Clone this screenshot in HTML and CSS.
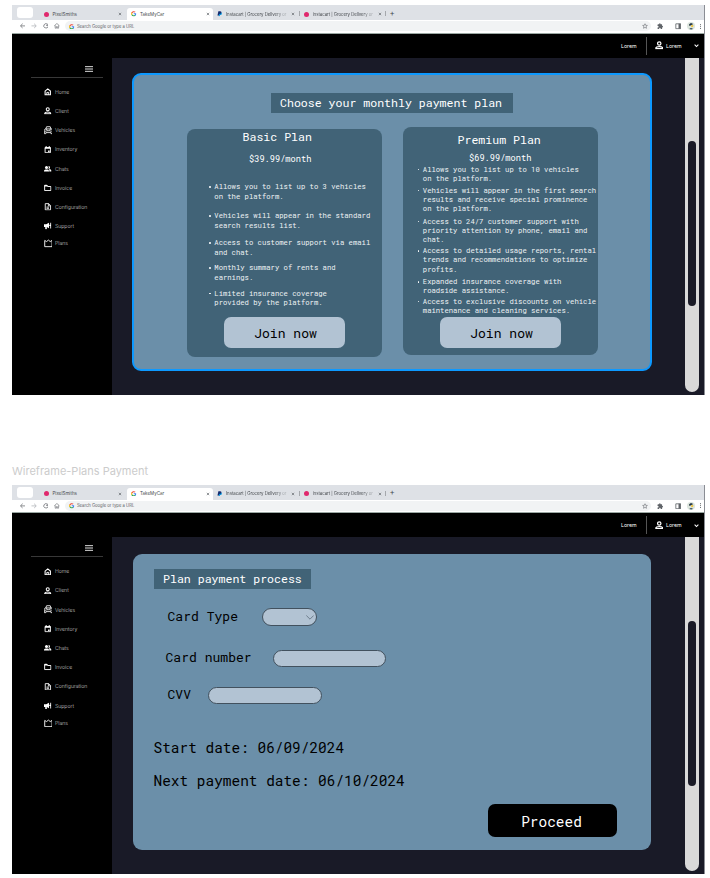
FILE: index.html
```html
<!DOCTYPE html>
<html lang="en">
<head>
<meta charset="utf-8">
<title>TakeMyCar</title>
<link rel="stylesheet" href="styles.css">
</head>
<body>
<svg class="sprite" aria-hidden="true">
  <symbol id="google" viewBox="0 0 24 24"><path fill="#4285f4" d="M23 12.3c0-.8-.1-1.600-.2-2.300H12v4.500h6.200a5.300 5.300 0 0 1-2.300 3.500v3h3.700c2.200-2 3.400-5 3.400-8.700z"/><path fill="#34a853" d="M12 23.500c3.100 0 5.700-1 7.600-2.800l-3.700-2.900c-1 .7-2.300 1.100-3.900 1.100-3 0-5.500-2-6.400-4.700H1.800v2.900A11.500 11.500 0 0 0 12 23.500z"/><path fill="#fbbc05" d="M5.600 14.200a6.900 6.900 0 0 1 0-4.400v-3H1.800a11.500 11.500 0 0 0 0 10.300z"/><path fill="#ea4335" d="M12 5.100c1.700 0 3.200.6 4.400 1.700l3.300-3.300A11.500 11.500 0 0 0 1.800 6.900l3.800 2.900C6.500 7.100 9 5.100 12 5.100z"/></symbol>
  <symbol id="paypal" viewBox="0 0 24 24"><path fill="#0a9be0" d="M9 6h9c4 1 4 6 2 9-2 2-4 2-7 2l-1 6H7z"/><path fill="#142c70" d="M6 1h8c5 0 6 4 5 7-1 4-4 5-9 5l-2 7H2z"/></symbol>
  <symbol id="close" viewBox="0 0 24 24"><path d="M5 5l14 14M19 5L5 19" fill="none" stroke="currentColor" stroke-width="4"/></symbol>
  <symbol id="back" viewBox="0 0 24 24"><path d="M22 12H3M11 3l-9 9 9 9" fill="none" stroke="currentColor" stroke-width="3"/></symbol>
  <symbol id="forward" viewBox="0 0 24 24"><path d="M2 12h19M13 3l9 9-9 9" fill="none" stroke="currentColor" stroke-width="3"/></symbol>
  <symbol id="reload" viewBox="0 0 24 24"><path d="M19 6a9 9 0 1 0 2 8M21 2v8h-8" fill="none" stroke="currentColor" stroke-width="3"/></symbol>
  <symbol id="house" viewBox="0 0 24 24"><path d="M1 12L12 2l11 10M5 10v12h5v-7h4v7h5V10" fill="none" stroke="currentColor" stroke-width="2.500"/></symbol>
  <symbol id="star" viewBox="0 0 24 24"><path d="M12 3l2.700 6.300 6.800.6-5.200 4.500 1.600 6.700L12 17.500l-5.900 3.600 1.600-6.700L2.500 9.900l6.800-.6z" fill="none" stroke="currentColor" stroke-width="2.200"/></symbol>
  <symbol id="puzzle" viewBox="0 0 24 24"><path fill="currentColor" d="M20 11h-1V7a2 2 0 0 0-2-2h-4V3.500a2.500 2.500 0 0 0-5 0V5H4a2 2 0 0 0-2 2v4h1.500a2.700 2.700 0 0 1 0 5.400H2V20c0 1.100.9 2 2 2h4v-1.500a2.700 2.700 0 0 1 5.400 0V22H17a2 2 0 0 0 2-2v-4h1a2.500 2.500 0 0 0 0-5z"/></symbol>
  <symbol id="panel" viewBox="0 0 24 24"><path d="M3 3h18v18H3z" fill="none" stroke="currentColor" stroke-width="3"/><path d="M13 3h8v18h-8z" fill="currentColor"/></symbol>
  <symbol id="avatar" viewBox="0 0 24 24"><circle cx="12" cy="12" r="12" fill="#dce5dd"/><path fill="#21313c" d="M6 9c1-7 11-7 12-2l-5 2-5 3z"/><path fill="#f0c33c" d="M12 10l7-1-1 6-5 1z"/><path fill="#3f5560" d="M7 21c2-4 8-4 11 0-3 2-8 2-11 0z"/></symbol>
  <symbol id="dots" viewBox="0 0 24 24"><g fill="currentColor"><circle cx="12" cy="3" r="2.500"/><circle cx="12" cy="12" r="2.500"/><circle cx="12" cy="21" r="2.500"/></g></symbol>
  <symbol id="chevron" viewBox="0 0 24 24"><path d="M3 8l9 9 9-9" fill="none" stroke="currentColor" stroke-width="5"/></symbol>
  <symbol id="thin-chevron" viewBox="0 0 24 14"><path d="M1 1l11 11L23 1" fill="none" stroke="currentColor" stroke-width="2.500"/></symbol>
  <symbol id="menu" viewBox="0 0 24 18"><path d="M0 2h24M0 9h24M0 16h24" stroke="currentColor" stroke-width="3"/></symbol>
  <symbol id="home" viewBox="0 0 24 24"><path d="M3.500 10L12 3l8.500 7v12h-17z" fill="none" stroke="currentColor" stroke-width="3.400"/><path d="M9 22v-8h6v8" fill="none" stroke="currentColor" stroke-width="3"/></symbol>
  <symbol id="client" viewBox="0 0 24 24"><circle cx="12" cy="7" r="4.800" fill="none" stroke="currentColor" stroke-width="3.400"/><path d="M2.500 21.500v-2c1-5 18-5 19 0v2z" fill="none" stroke="currentColor" stroke-width="3.400"/></symbol>
  <symbol id="car" viewBox="0 0 24 24"><path d="M5 8l2-6h10l2 6M3 8h18l2 4v9h-4v-3H5v3H1v-9zM7 8l1 5h8l1-5" fill="none" stroke="currentColor" stroke-width="2.300"/><circle cx="5" cy="14" r="1.700" fill="currentColor"/><circle cx="19" cy="14" r="1.700" fill="currentColor"/></symbol>
  <symbol id="calendar" viewBox="0 0 24 24"><path d="M3.500 5h17v16.500h-17z" fill="none" stroke="currentColor" stroke-width="3"/><path d="M3 4h18v5H3zM5 1h4v4H5zM15 1h4v4h-4zM13 14h5v5h-5z" fill="currentColor"/></symbol>
  <symbol id="group" viewBox="0 0 24 24"><path fill="currentColor" d="M0 21v-3c1-5 15-5 16 0v3zM17 21v-4l-2-3c5-1 9 1 9 4v3z"/><circle cx="8" cy="8" r="4.800" fill="currentColor"/><path fill="currentColor" d="M14 3.500c7-2 7 11 0 9 2-3 2-6 0-9z"/></symbol>
  <symbol id="folder" viewBox="0 0 24 24"><path d="M2 4h7l3 4h10v13H2z" fill="none" stroke="currentColor" stroke-width="3"/><path d="M2 3h8l3 5H2z" fill="currentColor"/></symbol>
  <symbol id="document" viewBox="0 0 24 24"><path d="M4 2h11l6 6v14H4zM14 2v7h7M8 13h8M8 17h8" fill="none" stroke="currentColor" stroke-width="2.800"/></symbol>
  <symbol id="megaphone" viewBox="0 0 24 24"><path fill="currentColor" d="M0 7h7l9-5v18l-7-4v7H4v-7H0zM20 2h3v19h-3zM17 9h4v4h-4z"/></symbol>
  <symbol id="crown" viewBox="0 0 24 22"><path d="M2 20V3l5 3 5-4 5 4 5-3v17z" fill="none" stroke="currentColor" stroke-width="2.500"/></symbol>
</svg>

<main class="canvas">
  <section class="frame">
    <div class="tabs">
      <span class="window-pill"></span>
      <div class="tab tab-one"><i class="dot"></i><span class="tab-name">PixelSmiths</span><svg class="x"><use href="#close"/></svg></div>
      <div class="tab tab-active"><svg class="fav"><use href="#google"/></svg><span class="tab-name">TakeMyCar</span><svg class="x"><use href="#close"/></svg></div>
      <div class="tab tab-three"><svg class="fav"><use href="#paypal"/></svg><span class="tab-name fade">Instacart | Grocery Delivery or</span><svg class="x"><use href="#close"/></svg></div>
      <div class="tab tab-four"><i class="dot"></i><span class="tab-name fade">Instacart | Grocery Delivery or</span><svg class="x"><use href="#close"/></svg></div>
      <span class="plus">+</span>
    </div>
    <div class="toolbar">
      <svg class="nav"><use href="#back"/></svg><svg class="nav pale"><use href="#forward"/></svg><svg class="nav"><use href="#reload"/></svg><svg class="nav"><use href="#house"/></svg>
      <div class="address"><svg class="fav"><use href="#google"/></svg><span>Search Google or type a URL</span><svg class="star"><use href="#star"/></svg></div>
      <svg class="tool"><use href="#puzzle"/></svg><svg class="tool panel-icon"><use href="#panel"/></svg><svg class="tool avatar"><use href="#avatar"/></svg><svg class="more"><use href="#dots"/></svg>
    </div>
    <header class="topbar">
      <span class="lang">Lorem</span><span class="rule"></span><svg class="person"><use href="#client"/></svg><span class="user">Lorem</span><svg class="down"><use href="#chevron"/></svg>
    </header>
    <div class="body">
      <nav class="sidebar">
        <div class="side-head"><svg><use href="#menu"/></svg></div>
        <a><svg><use href="#home"/></svg>Home</a>
        <a><svg><use href="#client"/></svg>Client</a>
        <a><svg class="wide"><use href="#car"/></svg>Vehicles</a>
        <a><svg><use href="#calendar"/></svg>Inventory</a>
        <a><svg><use href="#group"/></svg>Chats</a>
        <a><svg><use href="#folder"/></svg>Invoice</a>
        <a><svg><use href="#document"/></svg>Configuration</a>
        <a><svg><use href="#megaphone"/></svg>Support</a>
        <a class="last"><svg class="wide"><use href="#crown"/></svg>Plans</a>
      </nav>
      <div class="content">
        <div class="panel plans">
          <h1 class="banner">Choose your monthly payment plan</h1>
          <div class="cards">
            <article class="card basic">
              <h2>Basic Plan</h2>
              <p class="price">$39.99/month</p>
              <ul>
                <li>Allows you to list up to 3 vehicles<br>on the platform.</li>
                <li>Vehicles will appear in the standard<br>search results list.</li>
                <li>Access to customer support via email<br>and chat.</li>
                <li>Monthly summary of rents and<br>earnings.</li>
                <li>Limited insurance coverage<br>provided by the platform.</li>
              </ul>
              <button class="join">Join now</button>
            </article>
            <article class="card premium">
              <h2>Premium Plan</h2>
              <p class="price">$69.99/month</p>
              <ul>
                <li>Allows you to list up to 10 vehicles<br>on the platform.</li>
                <li>Vehicles will appear in the first search<br>results and receive special prominence<br>on the platform.</li>
                <li>Access to 24/7 customer support with<br>priority attention by phone, email and<br>chat.</li>
                <li>Access to detailed usage reports, rental<br>trends and recommendations to optimize<br>profits.</li>
                <li>Expanded insurance coverage with<br>roadside assistance.</li>
                <li>Access to exclusive discounts on vehicle<br>maintenance and cleaning services.</li>
              </ul>
              <button class="join">Join now</button>
            </article>
          </div>
        </div>
        <div class="scroll"><div class="thumb"></div></div>
      </div>
    </div>
  </section>

  <p class="frame-name">Wireframe-Plans Payment</p>

  <section class="frame">
    <div class="tabs">
      <span class="window-pill"></span>
      <div class="tab tab-one"><i class="dot"></i><span class="tab-name">PixelSmiths</span><svg class="x"><use href="#close"/></svg></div>
      <div class="tab tab-active"><svg class="fav"><use href="#google"/></svg><span class="tab-name">TakeMyCar</span><svg class="x"><use href="#close"/></svg></div>
      <div class="tab tab-three"><svg class="fav"><use href="#paypal"/></svg><span class="tab-name fade">Instacart | Grocery Delivery or</span><svg class="x"><use href="#close"/></svg></div>
      <div class="tab tab-four"><i class="dot"></i><span class="tab-name fade">Instacart | Grocery Delivery or</span><svg class="x"><use href="#close"/></svg></div>
      <span class="plus">+</span>
    </div>
    <div class="toolbar">
      <svg class="nav"><use href="#back"/></svg><svg class="nav pale"><use href="#forward"/></svg><svg class="nav"><use href="#reload"/></svg><svg class="nav"><use href="#house"/></svg>
      <div class="address"><svg class="fav"><use href="#google"/></svg><span>Search Google or type a URL</span><svg class="star"><use href="#star"/></svg></div>
      <svg class="tool"><use href="#puzzle"/></svg><svg class="tool panel-icon"><use href="#panel"/></svg><svg class="tool avatar"><use href="#avatar"/></svg><svg class="more"><use href="#dots"/></svg>
    </div>
    <header class="topbar">
      <span class="lang">Lorem</span><span class="rule"></span><svg class="person"><use href="#client"/></svg><span class="user">Lorem</span><svg class="down"><use href="#chevron"/></svg>
    </header>
    <div class="body">
      <nav class="sidebar">
        <div class="side-head"><svg><use href="#menu"/></svg></div>
        <a><svg><use href="#home"/></svg>Home</a>
        <a><svg><use href="#client"/></svg>Client</a>
        <a><svg class="wide"><use href="#car"/></svg>Vehicles</a>
        <a><svg><use href="#calendar"/></svg>Inventory</a>
        <a><svg><use href="#group"/></svg>Chats</a>
        <a><svg><use href="#folder"/></svg>Invoice</a>
        <a><svg><use href="#document"/></svg>Configuration</a>
        <a><svg><use href="#megaphone"/></svg>Support</a>
        <a class="last"><svg class="wide"><use href="#crown"/></svg>Plans</a>
      </nav>
      <div class="content">
        <div class="panel payment">
          <h1 class="banner">Plan payment process</h1>
          <div class="field type"><span>Card Type</span><div class="input"><svg><use href="#thin-chevron"/></svg></div></div>
          <div class="field number"><span>Card number</span><div class="input"></div></div>
          <div class="field cvv"><span>CVV</span><div class="input"></div></div>
          <p class="date">Start date: 06/09/2024</p>
          <p class="date">Next payment date: 06/10/2024</p>
          <button class="proceed">Proceed</button>
        </div>
        <div class="scroll"><div class="thumb"></div></div>
      </div>
    </div>
  </section>
</main>
</body>
</html>
```
FILE: styles.css
```css
* { box-sizing: border-box; }
body { margin: 0; background: #fff; overflow: hidden; }
h1, h2, p, ul { margin: 0; padding: 0; font-weight: 400; }
button { border: 0; padding: 0; display: block; }
svg { display: block; flex: none; }
.sprite { display: none; }

.canvas { padding: 5px 0 0 12px; width: 704.5px; height: 878px; font-family: Inter, sans-serif; }
.frame { width: 692.5px; height: 389.5px; background: #191a27; border-right: 0.5px solid #8a8d94; display: flex; flex-direction: column; }
.frame-name { height: 90px; padding-top: 68px; font: 11px/17px Inter, sans-serif; color: #ccc; white-space: nowrap; }

/* Browser chrome */
.tabs { height: 15px; background: #dee1e6; display: flex; align-items: center; padding-left: 5px; font-size: 4.500px; color: #45494d; flex: none; }
.window-pill { width: 16px; height: 11px; border-radius: 3px; background: #fff; }
.tab { display: flex; align-items: center; height: 12px; margin-top: 3px; white-space: nowrap; flex: none; }
.tab-one { width: 94px; padding: 0 5px 0 11px; }
.tab-active { width: 86px; padding: 0 3px 0 4px; background: #fff; border-radius: 3px 3px 0 0; }
.tab-three { width: 87px; padding: 0 5px 0 4px; }
.tab-four { width: 86px; padding: 0 4px 0 4px; }
.tab-three, .tab-four { background: linear-gradient(#8b8e92, #8b8e92) right 3px / 0.7px 5px no-repeat; }
.dot { width: 5px; height: 5px; border-radius: 50%; background: #e0286d; }
.fav { width: 5.500px; height: 5.500px; }
.dot + .tab-name, .fav + .tab-name { margin-left: 3.500px; }
.tab-name { flex: 1; line-height: 7px; }
.fade { flex: none; width: 64px; font-size: 4.350px; letter-spacing: -0.050px; margin-right: auto; -webkit-mask-image: linear-gradient(90deg, #000 75%, transparent 100%); mask-image: linear-gradient(90deg, #000 75%, transparent 100%); }
.x { width: 4px; height: 4px; color: #5f6368; }
.plus { font-size: 8px; line-height: 9px; margin: 1px 0 0 3.500px; }
.toolbar { height: 13.500px; background: #fff; border-bottom: 0.5px solid #9ba8a3; display: flex; align-items: center; padding-left: 7.500px; color: #5f6368; flex: none; }
.nav { width: 5.800px; height: 5.800px; margin-right: 5.800px; }
.pale { color: #aaadb1; }
.address { width: 586px; height: 10px; margin-left: -1px; border-radius: 5px; background: #f1f3f4; display: flex; align-items: center; padding: 0 3px 0 4.500px; font-size: 4.200px; line-height: 7px; color: #5c6064; }
.address span { margin-left: 2px; white-space: nowrap; }
.star { width: 6px; height: 6px; margin-left: auto; }
.tool { width: 6.500px; height: 6.500px; margin-left: 6.500px; }
.panel-icon { margin-left: 11px; }
.avatar { width: 8px; height: 8px; margin-left: 5.500px; }
.more { width: 5px; height: 5px; margin-left: 3.500px; }

/* Application header */
.topbar { height: 24px; background: #000; color: #fff; display: flex; align-items: center; padding-left: 609px; font-size: 5.250px; line-height: 8px; flex: none; }
.lang { width: 25.300px; }
.rule { width: 0.7px; height: 18px; margin-right: 8px; background: #555; }
.person { width: 8.500px; height: 8.500px; margin-right: 2.500px; }
.user { width: 28.500px; }
.down { width: 5px; height: 5px; }

/* Sidebar */
.body { flex: 1; display: flex; min-height: 0; }
.sidebar { width: 100px; background: #000; flex: none; color: #c5c5c5; font-size: 5.150px; font-weight: 300; }
.side-head { height: 20px; width: 72px; margin: 0 0 4.700px 19px; padding: 8px 0 0 54px; border-bottom: 1px solid #383838; color: #ddd; }
.side-head svg { width: 8px; height: 6px; }
.sidebar a { display: flex; align-items: center; height: 19.200px; padding-left: 32px; line-height: 8px; }
.sidebar a svg { width: 7.500px; height: 7.500px; margin-right: 3.500px; color: #fff; }
.sidebar a .wide { width: 8.800px; height: 8.800px; margin: 0 2.700px 0 -0.500px; }
.sidebar .last { height: 15.500px; }

/* Content */
.content { flex: 1; display: flex; justify-content: space-between; font-family: "Roboto Mono", "Liberation Mono", monospace; }
.scroll { width: 14px; height: 334px; margin-right: 5px; background: #d9d9d9; border-radius: 0 0 7px 7px; padding: 83.500px 2.500px 0 3.500px; }
.thumb { height: 165px; border-radius: 4px; background: #191a27; }
.panel { background: #6b8fa9; border-radius: 9px; }
.banner { background: #416377; color: #fff; font-size: 11.570px; line-height: 20px; height: 19.500px; white-space: pre; }

.plans { width: 520px; height: 298px; margin: 15.500px 0 0 20px; border: 2px solid #0d99ff; padding-top: 18px; }
.plans .banner { width: 242px; margin: 0 auto; padding-left: 9px; }
.cards { display: flex; gap: 21px; margin: 14.500px 0 0 53px; align-items: flex-start; }
.card { width: 195px; height: 228px; border-radius: 8px; background: #416377; color: #fff; white-space: nowrap; }
.basic { margin-top: 1.500px; }
.card h2 { font-size: 11.570px; line-height: 16px; }
.price { font-size: 8.670px; line-height: 12px; }
.card ul { list-style: none; font-size: 7.220px; line-height: 9.350px; color: #eef2f4; }
.card li { display: block; }
.card li::before { content: ""; float: left; width: 1.800px; height: 1.800px; margin: 4px 0 0 -5.300px; border-radius: 50%; background: #fff; }
.join { width: 121px; height: 31.500px; border-radius: 7px; background: #b2c3d3; color: #000; font: 13.050px/33px "Roboto Mono", "Liberation Mono", monospace; text-indent: 2px; }

.basic h2 { padding: 0.500px 0 0 55.500px; }
.basic .price { padding: 7.500px 0 0 62px; }
.basic ul { height: 135px; padding: 17.700px 0 0 27.300px; }
.basic li { margin-bottom: 6.500px; }
.basic li:nth-child(1) { margin-bottom: 10.600px; }
.basic li:nth-child(2) { margin-bottom: 8px; }
.basic .join { margin: 17px 0 0 37px; }

.premium h2 { padding: 5px 0 0 54.500px; }
.premium .price { padding: 3.500px 0 0 66px; }
.premium ul { height: 153px; padding: 1.200px 0 0 19.800px; }
.premium li:nth-child(1) { margin-bottom: 2.200px; }
.premium li:nth-child(2) { margin-bottom: 3.100px; }
.premium li:nth-child(3) { margin-bottom: 1.300px; }
.premium li:nth-child(4) { margin-bottom: 2.900px; }
.premium li:nth-child(5) { margin-bottom: 0.900px; }
.premium .join { margin: 0 0 0 37px; }

.payment { width: 518px; height: 295.500px; margin: 17px 0 0 21px; padding: 15px 0 0 20.500px; color: #000; }
.payment .banner { width: 157.500px; padding-left: 9.500px; }
.field { display: flex; align-items: center; font-size: 13.050px; line-height: 18px; height: 18px; white-space: nowrap; }
.field span { margin-top: -1.500px; }
.input { height: 17px; width: 113.500px; border: 0.5px solid #42515e; border-radius: 9px; background: #b2c3d3; }
.type { margin: 19.500px 0 0 14px; }
.type span { width: 94.500px; }
.type .input { width: 55px; height: 18px; padding: 6px 0 0 43px; }
.type svg { width: 8px; height: 5px; color: #60707e; }
.number { margin: 23px 0 0 12px; }
.number span { width: 107px; }
.cvv { margin: 19px 0 0 14px; }
.cvv span { width: 40.500px; }
.date { font-size: 14.440px; line-height: 20px; margin-top: 34px; }
.date + .date { margin-top: 12.500px; }
.proceed { width: 129px; height: 33px; margin: 13px 0 0 334.500px; border-radius: 7px; background: #000; color: #fff; font: 14.440px/35px "Roboto Mono", "Liberation Mono", monospace; text-indent: -2px; }
```
